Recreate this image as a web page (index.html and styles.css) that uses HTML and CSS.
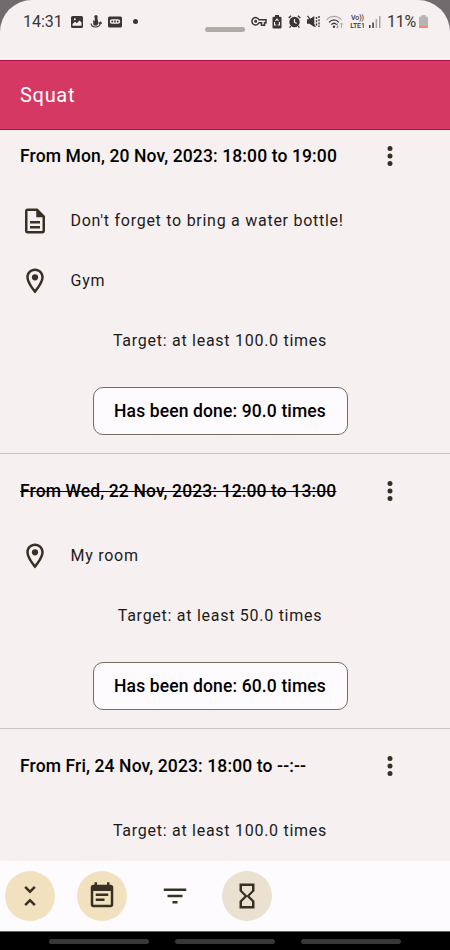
FILE: index.html
```html
<!DOCTYPE html>
<html lang="en">
<head>
<meta charset="utf-8">
<meta name="viewport" content="width=device-width, initial-scale=1">
<title>Squat</title>
<link rel="stylesheet" href="styles.css">
</head>
<body>
<svg class="defs" aria-hidden="true">
  <symbol id="more" viewBox="0 0 24 24"><path d="M12 8a2 2 0 1 0 0-4 2 2 0 0 0 0 4zm0 2a2 2 0 1 0 0 4 2 2 0 0 0 0-4zm0 6a2 2 0 1 0 0 4 2 2 0 0 0 0-4z"/></symbol>
  <symbol id="pin" viewBox="0 0 24 24"><path d="M12 2C8.13 2 5 5.13 5 9c0 5.25 7 13 7 13s7-7.75 7-13c0-3.87-3.13-7-7-7zM7 9c0-2.76 2.24-5 5-5s5 2.24 5 5c0 2.88-2.88 7.19-5 9.88C9.92 16.21 7 11.85 7 9z"/><circle cx="12" cy="9" r="2.5"/></symbol>
</svg>
<div class="phone">
  <header class="status">
    <div class="status-left">
      <span class="clock">14:31</span>
      <svg class="s-image" viewBox="0 0 12 12"><path fill-rule="evenodd" d="M1.5 0h9A1.5 1.5 0 0 1 12 1.500v9a1.500 1.500 0 0 1-1.500 1.500h-9A1.500 1.500 0 0 1 0 10.500v-9A1.500 1.500 0 0 1 1.500 0zM1.500 9.700h9V6.500L8.600 4.500 5.800 7.300 4 5.800 1.500 8zM3.800 2.300a1 1 0 1 0 0 2 1 1 0 0 0 0-2z"/></svg>
      <svg class="s-figure" viewBox="0 0 12 13"><circle cx="6" cy="1.800" r="1.700"/><path d="M4.800 3h2.700l.4 3 .8 2-1.700 2.500H3.700L3 8l1.700-2z"/><path class="line" d="M1.200 8.500c-.2 2 1.500 3.500 4 3.500 3 0 5-1.500 5.400-4.500M9 8.500l1.700-1.300.9 1.500M3 5.800l2 1.500"/></svg>
      <svg class="s-tape" viewBox="0 0 14 12"><rect y=".5" width="14" height="11" rx="1.500"/><path fill="#f6f0f0" d="M4 3.300h6a2.200 2.200 0 0 1 0 4.400H4a2.200 2.200 0 0 1 0-4.400z"/><circle cx="4.300" cy="5.500" r="1"/><circle cx="9.700" cy="5.500" r="1"/><path d="M6.200 4.500h1.600v2H6.200z"/></svg>
      <i class="dot"></i>
    </div>
    <i class="handle"></i>
    <div class="status-right">
      <svg class="s-key" viewBox="0 0 16 11"><g class="line wide"><path d="M8 3.800h7v3h-1.500v2.500h-3V6.800H8a3.700 3.700 0 1 1 0-3z"/><circle cx="4.700" cy="5.300" r=".8"/></g></svg>
      <svg class="s-saver" viewBox="0 0 10 14"><path d="M3 0h4v1.700h1.200Q9.500 1.700 9.500 3v9.200q0 1.300-1.300 1.300H1.800Q.5 13.500.5 12.200V3q0-1.300 1.300-1.300H3z"/><path class="cut" d="M3.500 5.800 5 4l1.500 1.800M2.600 7l-.1 3h1.800M7.400 7l.1 3H5.700"/></svg>
      <svg class="s-alarm" viewBox="0 0 12 12"><circle cx="6" cy="6.500" r="4.800"/><path class="line" d="M.6 2.700 2.900.7M11.400 2.700 9.100.7M2.500 10.300l-1 1.300M9.500 10.300l1 1.300"/><path class="cut" d="M6 3.700v3l2 1.200"/></svg>
      <svg class="s-mute" viewBox="0 0 13 13"><path d="M0 4.300h2.500L7.300 1v11L2.500 8.700H0z"/><path class="line" d="m.5.800 8 11.200"/><path class="line dash" d="M9.500 2v9.500M12 1v11"/></svg>
      <svg class="s-wifi" viewBox="0 0 18 14"><g class="line"><path class="faint" d="M.7 4.800c4-4.700 10.600-4.700 14.600 0"/><path d="M3 7.300c3-3.200 7-3.200 10 0M5.300 9.600c1.700-1.700 3.700-1.700 5.400 0"/><path class="faint thin" d="M11.500 8v5m-1.600-1.500 1.600 1.600 1.500-1.600M15.500 13V8m-1.500 1.500L15.500 8 17 9.500"/></g><circle cx="8" cy="11.700" r="1.200"/></svg>
      <span class="volte"><span>Vo))</span><span>LTE1</span></span>
      <svg class="s-signal" viewBox="0 0 12 13"><path d="M0 10h1.500v3H0zM3.300 7.500h1.500V13H3.300z"/><path class="fade" d="M6.600 4h1.500v9H6.600zM10 1h1.500v12H10z"/></svg>
      <span class="percent">11%</span>
      <svg class="s-battery" viewBox="0 0 9 13"><path fill="#b8b4b5" d="M2.500 0h4v1.500h1.200Q9 1.500 9 3v8.500Q9 13 7.500 13h-6Q0 13 0 11.500V3q0-1.500 1.300-1.500h1.200z"/><path fill="#e98b70" d="M0 11h9v.5Q9 13 7.500 13h-6Q0 13 0 11.500z"/></svg>
    </div>
  </header>
  <h1 class="appbar">Squat</h1>
  <main class="list">
    <section class="entry">
      <div class="entry-head"><h2 class="when">From Mon, 20 Nov, 2023: 18:00 to 19:00</h2><svg class="icon"><use href="#more"/></svg></div>
      <div class="row"><svg class="icon" viewBox="0 0 24 24"><path d="M8 16h8v2H8zm0-4h8v2H8zm6-10H6c-1.100 0-2 .9-2 2v16c0 1.100.89 2 1.990 2H18c1.100 0 2-.9 2-2V8l-6-6zm4 18H6V4h7v5h5v11z"/></svg><span>Don't forget to bring a water bottle!</span></div>
      <div class="row"><svg class="icon"><use href="#pin"/></svg><span>Gym</span></div>
      <p class="target">Target: at least 100.0 times</p>
      <div class="action"><button class="done">Has been done: 90.0 times</button></div>
    </section>
    <section class="entry">
      <div class="entry-head"><h2 class="when past">From Wed, 22 Nov, 2023: 12:00 to 13:00</h2><svg class="icon"><use href="#more"/></svg></div>
      <div class="row"><svg class="icon"><use href="#pin"/></svg><span>My room</span></div>
      <p class="target">Target: at least 50.0 times</p>
      <div class="action"><button class="done">Has been done: 60.0 times</button></div>
    </section>
    <section class="entry">
      <div class="entry-head"><h2 class="when">From Fri, 24 Nov, 2023: 18:00 to --:--</h2><svg class="icon"><use href="#more"/></svg></div>
      <p class="target">Target: at least 100.0 times</p>
    </section>
  </main>
  <nav class="tools">
    <button class="tool on"><svg class="icon" viewBox="0 0 24 24"><path d="M7.410 18.590 8.830 20 12 16.830 15.170 20l1.410-1.410L12 14l-4.590 4.590zm9.180-13.180L15.170 4 12 7.170 8.830 4 7.410 5.410 12 10l4.590-4.590z"/></svg></button>
    <button class="tool on"><svg class="icon" viewBox="0 0 24 24"><path d="M17 10H7v2h10v-2zm2-7h-1V1h-2v2H8V1H6v2H5c-1.110 0-1.990.9-1.990 2L3 19c0 1.100.89 2 2 2h14c1.100 0 2-.9 2-2V5c0-1.100-.9-2-2-2zm0 16H5V8h14v11zm-5-5H7v2h7v-2z"/></svg></button>
    <button class="tool"><svg class="icon" viewBox="0 0 24 24"><path d="M10 18h4v-2h-4v2zM3 6v2h18V6H3zm3 7h12v-2H6v2z"/></svg></button>
    <button class="tool muted"><svg class="icon" viewBox="0 0 24 24"><path d="M6 2v6h.01L6 8.010 10 12l-4 4 .01.01H6V22h12v-5.990h-.01L18 16l-4-4 4-3.990-.01-.01H18V2H6zm10 14.500V20H8v-3.500l4-4 4 4zm-4-5-4-4V4h8v3.500l-4 4z"/></svg></button>
  </nav>
  <footer class="gestures"><i></i><i></i><i></i></footer>
</div>
</body>
</html>
```

FILE: styles.css
```css
* { box-sizing: border-box; }
body { margin: 0; background: #706b6c; font-family: Roboto, sans-serif; color: #1d1b1a; }
h1, h2, p { margin: 0; font-weight: 400; }
button { border: 0; padding: 0; margin: 0; font: inherit; color: inherit; }
.defs { position: absolute; width: 0; height: 0; }
.phone { width: 450px; height: 950px; display: flex; flex-direction: column; overflow: hidden; border-radius: 32px 32px 0 0; background: #f6f0f0; }

.status { position: relative; height: 60px; flex: none; display: flex; justify-content: space-between; padding: 10px 22px 0 23px; color: #393637; }
.status svg { fill: #393637; flex: none; }
.status-left, .status-right { display: flex; align-items: center; height: 23px; }
.clock { width: 40px; font-size: 16px; line-height: 22px; white-space: nowrap; }
.s-image { width: 12px; height: 12px; margin-left: 8px; }
.s-figure { width: 12px; height: 13px; margin-left: 7px; }
.s-tape { width: 14px; height: 12px; margin-left: 6px; }
.dot { width: 5px; height: 5px; margin-left: 11px; border-radius: 50%; background: #393637; }
.handle { position: absolute; left: 205px; top: 27px; width: 40px; height: 5px; border-radius: 3px; background: #b1aca8; }
.status .line { fill: none; stroke: #393637; stroke-width: 1.2; }
.status .wide { stroke-width: 1.5; }
.status .cut { fill: none; stroke: #f6f0f0; stroke-width: 1.1; }
.status .dash { stroke-dasharray: 2 1.2; stroke-width: 1.4; }
.status .faint { stroke: #aaa5a6; }
.status .thin { stroke-width: 1; }
.status .fade { fill: #aaa5a6; }
.s-key { width: 16px; height: 11px; }
.s-saver { width: 10px; height: 14px; margin-left: 5px; }
.s-alarm { width: 13px; height: 13px; margin-left: 6px; }
.s-mute { width: 13px; height: 13px; margin-left: 6px; }
.s-wifi { width: 18px; height: 14px; margin-left: 6px; }
.volte { display: flex; flex-direction: column; align-items: center; width: 17px; margin-left: 5px; font-size: 7px; line-height: 8px; font-weight: 500; letter-spacing: -.1px; }
.s-signal { width: 12px; height: 13px; margin-left: 3px; }
.percent { width: 29px; margin-left: 6px; font-size: 16px; letter-spacing: -.2px; }
.s-battery { width: 9px; height: 13px; margin-left: 3px; }

.appbar { flex: none; display: flex; align-items: center; height: 70px; padding: 0 20px 1px; border: solid #b50f4f; border-width: 1px 0; background: #d63864; color: #fff; font-size: 20px; letter-spacing: .7px; }

.list { flex: 1; min-height: 0; overflow: hidden; }
.entry { border-bottom: 1px solid #cfc5c0; }
.entry:first-child { margin-top: -11px; }
.entry:last-child { border: 0; }
.icon { width: 30px; height: 30px; flex: none; fill: #393025; }
.entry-head { display: flex; align-items: center; justify-content: space-between; height: 71px; padding: 2px 45px 0 20px; }
.when { font-size: 17.5px; font-weight: 500; letter-spacing: .125px; color: #000; white-space: nowrap; }
.past { text-decoration: line-through; }
.row { display: flex; align-items: center; gap: 20.5px; height: 60px; padding: 1px 20px 0; font-size: 16px; letter-spacing: .73px; }
.target { height: 60px; line-height: 62px; padding-right: 10px; text-align: center; font-size: 16px; letter-spacing: .73px; }
.action { display: flex; justify-content: center; height: 83px; padding: 17px 10px 18px 0; }
.done { width: 255px; border: 1px solid #746d62; border-radius: 10px; background: #fefbff; color: #000; font-size: 17.5px; font-weight: 500; letter-spacing: .125px; }

.tools { flex: none; display: flex; align-items: center; gap: 22.4px; height: 70px; padding: 0 5px; background: #fefbff; }
.tool { display: flex; align-items: center; justify-content: center; width: 50px; height: 50px; border-radius: 50%; background: none; }
.on { background: #f2e1be; }
.muted { background: #ebe1d0; }
.gestures { flex: none; display: flex; gap: 26px; height: 19px; padding: 7px 0 0 49px; border-top: 1px solid #666; background: #000; }
.gestures i { width: 100px; height: 5px; border-radius: 3px; background: #383838; }
```
